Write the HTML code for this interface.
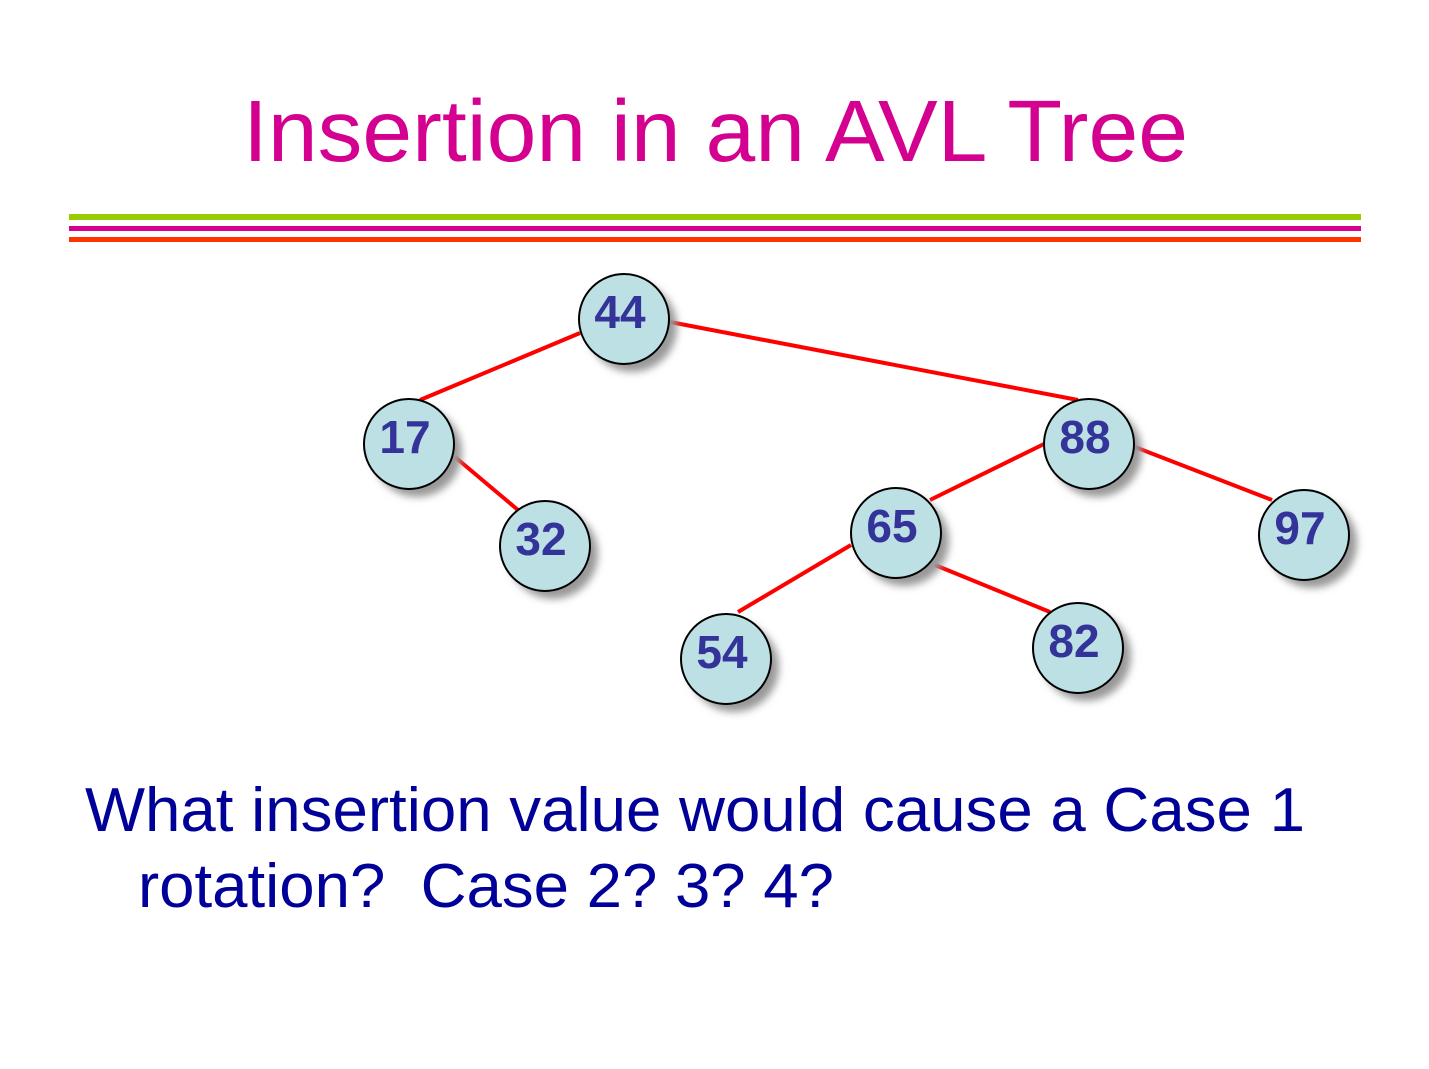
<!DOCTYPE html>
<html><head><meta charset="utf-8"><style>
html,body{margin:0;padding:0;background:#fff;}
svg{display:block}
</style></head><body>
<svg width="1429" height="1069" viewBox="0 0 1429 1069" xmlns="http://www.w3.org/2000/svg">
<defs>
<filter id="sh" x="-50%" y="-50%" width="200%" height="200%">
<feGaussianBlur stdDeviation="4"/>
</filter>
</defs>
<rect width="1429" height="1069" fill="#fff"/>
<text x="243" y="161" font-family="Liberation Sans, sans-serif" font-size="87" fill="#d4008f" textLength="945" lengthAdjust="spacingAndGlyphs">Insertion in an AVL Tree</text>
<rect x="69" y="214" width="1292" height="6" fill="#99cc00"/>
<rect x="69" y="226" width="1292" height="5" fill="#d4008f"/>
<rect x="69" y="237" width="1292" height="5" fill="#ff3300"/>
<g stroke="#ff0000" stroke-width="4">
<line x1="580" y1="333" x2="420" y2="400"/>
<line x1="670" y1="322" x2="1078" y2="400"/>
<line x1="455" y1="457" x2="518" y2="510"/>
<line x1="1044" y1="444" x2="930" y2="500"/>
<line x1="1135" y1="447" x2="1272" y2="500"/>
<line x1="851" y1="545" x2="738" y2="612"/>
<line x1="935" y1="565" x2="1050" y2="612"/>
</g>
<g font-family="Liberation Sans, sans-serif" font-weight="bold" font-size="46" fill="#333399" text-anchor="middle">
<g><circle cx="632" cy="327" r="45" fill="#999" filter="url(#sh)"/><circle cx="624" cy="319" r="45" fill="#bde0e4" stroke="#000" stroke-width="2"/><text x="620" y="328">44</text></g>
<g><circle cx="417" cy="452" r="45" fill="#999" filter="url(#sh)"/><circle cx="409" cy="444" r="45" fill="#bde0e4" stroke="#000" stroke-width="2"/><text x="405" y="453">17</text></g>
<g><circle cx="553" cy="554" r="45" fill="#999" filter="url(#sh)"/><circle cx="545" cy="546" r="45" fill="#bde0e4" stroke="#000" stroke-width="2"/><text x="541" y="555">32</text></g>
<g><circle cx="1097" cy="452" r="45" fill="#999" filter="url(#sh)"/><circle cx="1089" cy="444" r="45" fill="#bde0e4" stroke="#000" stroke-width="2"/><text x="1085" y="453">88</text></g>
<g><circle cx="904" cy="541" r="45" fill="#999" filter="url(#sh)"/><circle cx="896" cy="533" r="45" fill="#bde0e4" stroke="#000" stroke-width="2"/><text x="892" y="542">65</text></g>
<g><circle cx="1312" cy="543" r="45" fill="#999" filter="url(#sh)"/><circle cx="1304" cy="535" r="45" fill="#bde0e4" stroke="#000" stroke-width="2"/><text x="1300" y="544">97</text></g>
<g><circle cx="734" cy="667" r="45" fill="#999" filter="url(#sh)"/><circle cx="726" cy="659" r="45" fill="#bde0e4" stroke="#000" stroke-width="2"/><text x="722" y="668">54</text></g>
<g><circle cx="1086" cy="656" r="45" fill="#999" filter="url(#sh)"/><circle cx="1078" cy="648" r="45" fill="#bde0e4" stroke="#000" stroke-width="2"/><text x="1074" y="657">82</text></g>
</g>
<g font-family="Liberation Sans, sans-serif" font-size="62" fill="#000099">
<text x="85" y="831" textLength="1220" lengthAdjust="spacingAndGlyphs">What insertion value would cause a Case 1</text>
<text x="138" y="907" textLength="696" lengthAdjust="spacingAndGlyphs">rotation?&#160; Case 2? 3? 4?</text>
</g>
</svg>
</body></html>
